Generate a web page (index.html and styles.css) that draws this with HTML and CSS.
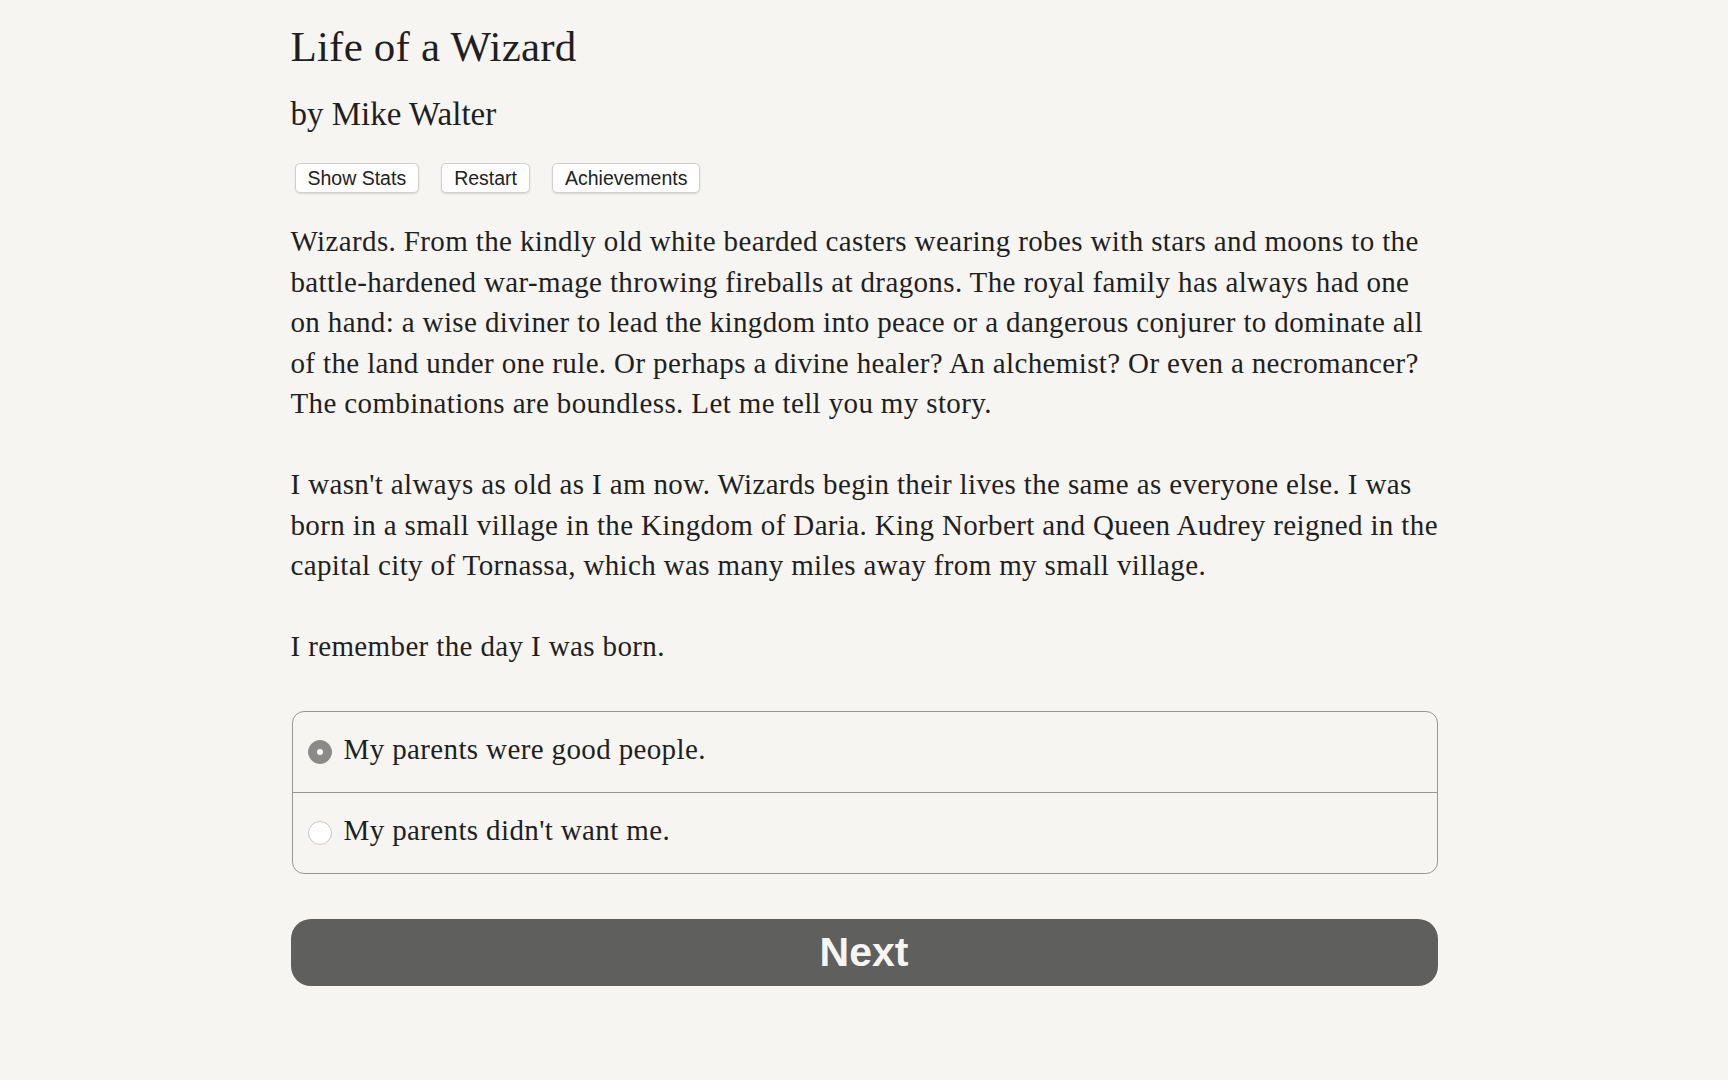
FILE: index.html
```html
<!DOCTYPE html>
<html lang="en">
<head>
<meta charset="utf-8">
<title>Life of a Wizard</title>
<link rel="stylesheet" href="styles.css">
</head>
<body>
<main class="page">
  <h1 class="title">Life of a Wizard</h1>
  <h2 class="author">by Mike Walter</h2>
  <div class="toolbar">
    <button class="tool-btn">Show Stats</button>
    <button class="tool-btn">Restart</button>
    <button class="tool-btn">Achievements</button>
  </div>
  <div class="story">
    <p>Wizards. From the kindly old white bearded casters wearing robes with stars and moons to the<br>battle-hardened war-mage throwing fireballs at dragons. The royal family has always had one<br>on hand: a wise diviner to lead the kingdom into peace or a dangerous conjurer to dominate all<br>of the land under one rule. Or perhaps a divine healer? An alchemist? Or even a necromancer?<br>The combinations are boundless. Let me tell you my story.</p>
    <p>I wasn't always as old as I am now. Wizards begin their lives the same as everyone else. I was<br>born in a small village in the Kingdom of Daria. King Norbert and Queen Audrey reigned in the<br>capital city of Tornassa, which was many miles away from my small village.</p>
    <p>I remember the day I was born.</p>
  </div>
  <form class="choices">
    <label class="choice">
      <span class="radio radio-on"></span>
      <span class="choice-text">My parents were good people.</span>
    </label>
    <label class="choice">
      <span class="radio"></span>
      <span class="choice-text">My parents didn't want me.</span>
    </label>
  </form>
  <button class="next-btn">Next</button>
</main>
</body>
</html>
```
FILE: styles.css
```css
html, body {
  margin: 0;
  padding: 0;
  background: #f7f5f2;
}

body {
  font-family: "Liberation Serif", "Times New Roman", serif;
  color: #1f1f1f;
}

.page {
  width: 1147px;
  margin: 0 auto;
  padding-top: 22px;
}

.title {
  margin: 0;
  font-size: 43px;
  font-weight: normal;
  line-height: 50px;
  letter-spacing: 0.2px;
}

.author {
  margin: 22px 0 0 0;
  font-size: 33px;
  font-weight: normal;
  line-height: 40px;
}

.toolbar {
  display: flex;
  gap: 22px;
  padding-left: 4px;
  margin-top: 29px;
}

.tool-btn {
  font-family: "Liberation Sans", Arial, sans-serif;
  font-size: 19.5px;
  line-height: 22px;
  color: #222;
  background: #fff;
  border: 1px solid #d2d0cd;
  border-radius: 5px;
  padding: 3px 12px;
  box-shadow: 0 1px 2px rgba(0, 0, 0, 0.12);
}

.story {
  margin-top: 28px;
  font-size: 29px;
  letter-spacing: 0.37px;
  line-height: 40.5px;
}

.story p {
  margin: 0 0 40.5px 0;
  white-space: nowrap;
}

.story p:last-child {
  margin-bottom: 0;
}

.choices {
  margin: 44px 0 0 1px;
  border: 1px solid #9a9896;
  border-radius: 12px;
  display: flex;
  flex-direction: column;
}

.choice {
  display: flex;
  align-items: center;
  height: 80px;
  padding-left: 15px;
  padding-bottom: 4px;
  box-sizing: border-box;
  font-size: 29px;
  letter-spacing: 0.37px;
  line-height: 40.5px;
}

.choice + .choice {
  border-top: 1px solid #9a9896;
  height: 81px;
}

.radio {
  width: 22px;
  height: 22px;
  border-radius: 50%;
  border: 1px solid #c9c7c5;
  background: #fff;
  margin-right: 12px;
  flex: none;
  position: relative;
  top: 2px;
}

.radio-on {
  background: #8b8a89;
  border-color: #8b8a89;
}

.radio-on::after {
  content: "";
  position: absolute;
  left: 8px;
  top: 8px;
  width: 6px;
  height: 6px;
  border-radius: 50%;
  background: #fff;
}

.next-btn {
  display: block;
  width: 100%;
  margin-top: 45px;
  height: 67px;
  border: none;
  border-radius: 20px;
  background: #5f5f5e;
  color: #f7f5f2;
  font-family: "Liberation Sans", Arial, sans-serif;
  font-weight: bold;
  font-size: 41px;
}
```
